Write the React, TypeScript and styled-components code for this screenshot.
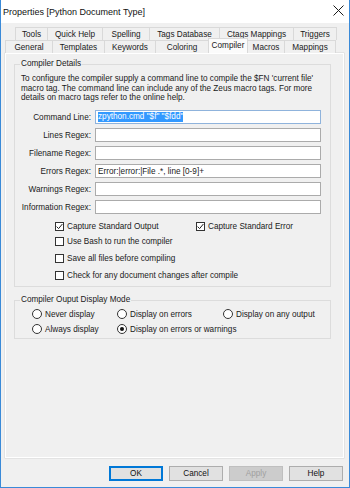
import styled, { createGlobalStyle } from 'styled-components';

const GlobalStyle = createGlobalStyle`
  html, body {
    margin: 0;
    padding: 0;
    background: #f0f0f0;
  }
  * {
    box-sizing: border-box;
  }
`;

const rowOneTabs = [
  { label: 'Tools', width: 33 },
  { label: 'Quick Help', width: 56 },
  { label: 'Spelling', width: 48 },
  { label: 'Tags Database', width: 71 },
  { label: 'Ctags Mappings', width: 75 },
  { label: 'Triggers', width: 44 },
];

const rowTwoTabs = [
  { label: 'General', width: 48 },
  { label: 'Templates', width: 53 },
  { label: 'Keywords', width: 52 },
  { label: 'Coloring', width: 54 },
  { label: 'Compiler', width: 40, active: true },
  { label: 'Macros', width: 38 },
  { label: 'Mappings', width: 52 },
];

const regexFields = [
  { label: 'Lines Regex:', value: '' },
  { label: 'Filename Regex:', value: '' },
  { label: 'Errors Regex:', value: 'Error:|error:|File .*, line [0-9]+' },
  { label: 'Warnings Regex:', value: '' },
  { label: 'Information Regex:', value: '' },
];

function CheckMark() {
  return (
    <svg width="7" height="7" viewBox="0 0 7 7">
      <polyline points="0.6,3.6 2.6,5.6 6.4,1" fill="none" stroke="#222" strokeWidth="1" />
    </svg>
  );
}

function Check({ label, checked }: { label: string; checked?: boolean }) {
  return (
    <CheckItem>
      <CheckBox>{checked && <CheckMark />}</CheckBox>
      <span>{label}</span>
    </CheckItem>
  );
}

function Radio({ label, checked }: { label: string; checked?: boolean }) {
  return (
    <CheckItem>
      <RadioDot $checked={checked} />
      <span>{label}</span>
    </CheckItem>
  );
}

function App() {
  return (
    <>
      <GlobalStyle />
      <Window>
        <TitleBar>
          <Title>Properties [Python Document Type]</Title>
          <CloseIcon width="11" height="11" viewBox="0 0 11 11">
            <path d="M0.5 0.5 L10.5 10.5 M10.5 0.5 L0.5 10.5" stroke="#1a1a1a" strokeWidth="1" />
          </CloseIcon>
        </TitleBar>
        <Body>
          <TabRow $indent={10}>
            {rowOneTabs.map((t) => (
              <Tab key={t.label} $width={t.width}>{t.label}</Tab>
            ))}
          </TabRow>
          <TabRow $indent={0}>
            {rowTwoTabs.map((t) => (
              <Tab key={t.label} $width={t.width} $active={t.active}>{t.label}</Tab>
            ))}
          </TabRow>
          <Panel>
            <Group>
              <Legend>Compiler Details</Legend>
              <Description>
                To configure the compiler supply a command line to compile the $FN 'current file'
                <br />
                macro tag. The command line can include any of the Zeus macro tags. For more
                <br />
                details on macro tags refer to the online help.
              </Description>
              <Fields>
                <FieldRow>
                  <FieldLabel>Command Line:</FieldLabel>
                  <Input $focused>
                    <Selection>zpython.cmd "$f" "$fdd"</Selection>
                  </Input>
                </FieldRow>
                {regexFields.map((f) => (
                  <FieldRow key={f.label}>
                    <FieldLabel>{f.label}</FieldLabel>
                    <Input>{f.value}</Input>
                  </FieldRow>
                ))}
              </Fields>
              <Checks>
                <CheckRow $top={6}>
                  <Check label="Capture Standard Output" checked />
                  <Check label="Capture Standard Error" checked />
                </CheckRow>
                <CheckRow $top={3}>
                  <Check label="Use Bash to run the compiler" />
                </CheckRow>
                <CheckRow $top={5}>
                  <Check label="Save all files before compiling" />
                </CheckRow>
                <CheckRow $top={5}>
                  <Check label="Check for any document changes after compile" />
                </CheckRow>
              </Checks>
            </Group>
            <Group $top={8}>
              <Legend>Compiler Ouput Display Mode</Legend>
              <RadioGrid>
                <Radio label="Never display" />
                <Radio label="Display on errors" />
                <Radio label="Display on any output" />
                <Radio label="Always display" />
                <Radio label="Display on errors or warnings" checked />
              </RadioGrid>
            </Group>
          </Panel>
          <ButtonBar>
            <Button $primary>OK</Button>
            <Button>Cancel</Button>
            <Button disabled>Apply</Button>
            <Button>Help</Button>
          </ButtonBar>
        </Body>
      </Window>
    </>
  );
}

export default App;

const Window = styled.div`
  display: flex;
  flex-direction: column;
  width: 350px;
  height: 488px;
  border: 1px solid #3a8ad8;
  border-top: none;
  background: #f0f0f0;
  font-family: 'Liberation Sans', Arial, sans-serif;
  font-size: 8.2px;
  color: #1a1a1a;
`;

const TitleBar = styled.div`
  display: flex;
  align-items: center;
  justify-content: space-between;
  height: 23px;
  padding: 0 4px 0 2px;
  background: #fff;
`;

const Title = styled.span`
  font-size: 9px;
  color: #111;
`;

const CloseIcon = styled.svg`
  margin-right: 1px;
  margin-top: -2px;
`;

const Body = styled.div`
  display: flex;
  flex-direction: column;
  flex: 1;
  padding: 4px 5px 6px 4px;
`;

const TabRow = styled.div<{ $indent: number }>`
  display: flex;
  height: 13px;
  padding-left: ${(p) => p.$indent}px;
`;

const Tab = styled.div<{ $width: number; $active?: boolean }>`
  display: flex;
  align-items: center;
  justify-content: center;
  width: ${(p) => p.$width}px;
  height: ${(p) => (p.$active ? 15 : 13)}px;
  margin-top: ${(p) => (p.$active ? -2 : 0)}px;
  border: 1px solid #d9d9d9;
  border-bottom: none;
  margin-right: -1px;
  background: ${(p) => (p.$active ? '#fbfbfb' : '#f0f0f0')};
  position: relative;
  z-index: ${(p) => (p.$active ? 2 : 1)};
  padding-bottom: ${(p) => (p.$active ? 2 : 0)}px;
  white-space: nowrap;
  &:last-child {
    margin-right: 0;
  }
`;

const Panel = styled.div`
  display: flex;
  flex-direction: column;
  height: 405px;
  width: 339px;
  border: 1px solid #fff;
  box-shadow: 0 0 0 0.5px #d6d6d6;
  padding: 5px 12px 0 8px;
`;

const Group = styled.fieldset<{ $top?: number }>`
  margin: ${(p) => p.$top ?? 0}px 0 0 0;
  padding: 0;
  border: 1px solid #dcdcdc;
  min-width: 0;
`;

const Legend = styled.legend`
  margin-left: 5px;
  padding: 0 1px;
  line-height: 10px;
`;

const Description = styled.div`
  margin: 5px 6px 0 6px;
  line-height: 9.7px;
  white-space: nowrap;
`;

const Fields = styled.div`
  display: flex;
  flex-direction: column;
  gap: 4px;
  margin-top: 7px;
`;

const FieldRow = styled.div`
  display: flex;
  align-items: center;
  gap: 4px;
`;

const FieldLabel = styled.span`
  width: 76px;
  text-align: right;
  white-space: nowrap;
`;

const Input = styled.div<{ $focused?: boolean }>`
  display: flex;
  align-items: center;
  width: 226px;
  height: 14px;
  padding: 0 2px;
  background: #fff;
  border: 1px solid ${(p) => (p.$focused ? '#8fb3dc' : '#ababab')};
  white-space: nowrap;
  overflow: hidden;
`;

const Selection = styled.span`
  background: #3399ff;
  color: #fff;
  line-height: 10px;
`;

const Checks = styled.div`
  display: flex;
  flex-direction: column;
  padding: 0 0 5px 40px;
`;

const CheckRow = styled.div<{ $top: number }>`
  display: grid;
  grid-template-columns: 141px 1fr;
  height: 12px;
  margin-top: ${(p) => p.$top}px;
`;

const CheckItem = styled.label`
  display: flex;
  align-items: center;
  gap: 3px;
  height: 12px;
  white-space: nowrap;
`;

const CheckBox = styled.span`
  display: flex;
  align-items: center;
  justify-content: center;
  width: 9px;
  height: 9px;
  border: 1px solid #333;
  background: #fff;
  flex-shrink: 0;
`;

const RadioDot = styled.span<{ $checked?: boolean }>`
  display: flex;
  align-items: center;
  justify-content: center;
  width: 10px;
  height: 10px;
  border: 1px solid #333;
  border-radius: 50%;
  background: #fff;
  flex-shrink: 0;
  &::after {
    content: '';
    display: ${(p) => (p.$checked ? 'block' : 'none')};
    width: 4px;
    height: 4px;
    border-radius: 50%;
    background: #111;
  }
`;

const RadioGrid = styled.div`
  display: grid;
  grid-template-columns: 85px 106px 1fr;
  row-gap: 3px;
  padding: 3px 0 3px 17px;
`;

const ButtonBar = styled.div`
  display: flex;
  justify-content: flex-end;
  gap: 6px;
  margin-top: 8px;
  padding-right: 1px;
`;

const Button = styled.button<{ $primary?: boolean }>`
  width: 54px;
  height: 15px;
  padding: 0;
  font-family: inherit;
  font-size: 8.2px;
  color: #111;
  background: #e1e1e1;
  border: ${(p) => (p.$primary ? '2px solid #0078d7' : '1px solid #adadad')};
  &:disabled {
    background: #cccccc;
    border-color: #bfbfbf;
    color: #a0a0a0;
  }
`;
